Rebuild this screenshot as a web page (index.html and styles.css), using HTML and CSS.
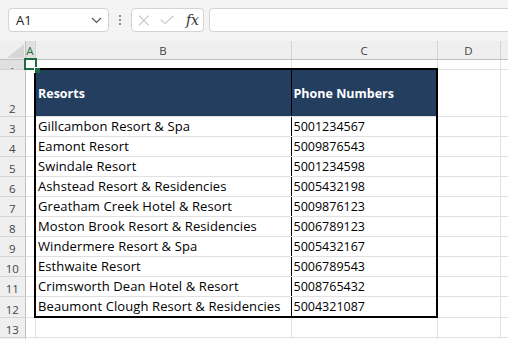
FILE: index.html
```html
<!DOCTYPE html>
<html>
<head>
<meta charset="utf-8">
<link rel="stylesheet" href="styles.css">
</head>
<body>
<div class="app">
  <div class="toolbar">
    <div class="namebox">
      <span class="ref">A1</span>
      <svg class="chev" width="11" height="7" viewBox="0 0 11 7"><polyline points="1,1 5.5,5.5 10,1" fill="none" stroke="#555" stroke-width="1.2"/></svg>
    </div>
    <div class="dots"><i></i><i></i><i></i></div>
    <div class="fxgroup">
      <svg width="13" height="13" viewBox="0 0 13 13"><path d="M1 1L12 12M12 1L1 12" stroke="#c4c4c4" stroke-width="1.2" fill="none"/></svg>
      <svg width="16" height="10" viewBox="0 0 16 10"><polyline points="1,4.5 5.5,9 15,0.5" fill="none" stroke="#c4c4c4" stroke-width="1.2"/></svg>
      <span class="fx">fx</span>
    </div>
    <div class="formula"></div>
  </div>
  <table class="grid">
    <colgroup>
      <col class="c-rh"><col class="c-a"><col class="c-b"><col class="c-c"><col class="c-d"><col class="c-e">
    </colgroup>
    <tr class="colhdr">
      <th class="corner"><svg width="17" height="14" viewBox="0 0 17 14"><polygon points="17,0 17,14 0,14" fill="#d6d6d6"/></svg></th>
      <th class="selcol">A</th><th>B</th><th>C</th><th>D</th><th></th>
    </tr>
    <tr class="r1">
      <th class="rh rsel"><span>1</span></th>
      <td class="a1"><div class="selbox"></div></td><td></td><td></td><td></td><td></td>
    </tr>
    <tr class="r2">
      <th class="rh">2</th>
      <td></td>
      <td class="hd tl">Resorts</td>
      <td class="hd tr">Phone Numbers</td>
      <td></td><td></td>
    </tr>
    <tr><th class="rh">3</th><td></td><td class="bl">Gillcambon Resort &amp; Spa</td><td class="br">5001234567</td><td></td><td></td></tr>
    <tr><th class="rh">4</th><td></td><td class="bl">Eamont Resort</td><td class="br">5009876543</td><td></td><td></td></tr>
    <tr><th class="rh">5</th><td></td><td class="bl">Swindale Resort</td><td class="br">5001234598</td><td></td><td></td></tr>
    <tr><th class="rh">6</th><td></td><td class="bl">Ashstead Resort &amp; Residencies</td><td class="br">5005432198</td><td></td><td></td></tr>
    <tr><th class="rh">7</th><td></td><td class="bl">Greatham Creek Hotel &amp; Resort</td><td class="br">5009876123</td><td></td><td></td></tr>
    <tr><th class="rh">8</th><td></td><td class="bl">Moston Brook Resort &amp; Residencies</td><td class="br">5006789123</td><td></td><td></td></tr>
    <tr><th class="rh">9</th><td></td><td class="bl">Windermere Resort &amp; Spa</td><td class="br">5005432167</td><td></td><td></td></tr>
    <tr><th class="rh">10</th><td></td><td class="bl">Esthwaite Resort</td><td class="br">5006789543</td><td></td><td></td></tr>
    <tr><th class="rh">11</th><td></td><td class="bl">Crimsworth Dean Hotel &amp; Resort</td><td class="br">5008765432</td><td></td><td></td></tr>
    <tr class="last"><th class="rh">12</th><td></td><td class="bl">Beaumont Clough Resort &amp; Residencies</td><td class="br">5004321087</td><td></td><td></td></tr>
    <tr><th class="rh">13</th><td></td><td></td><td></td><td></td><td></td></tr>
    <tr><th class="rh"></th><td></td><td></td><td></td><td></td><td></td></tr>
  </table>
</div>
</body>
</html>
```
FILE: styles.css
```css
html, body {
  margin: 0;
  padding: 0;
}
body {
  background: #f3f3f3;
  width: 508px;
  height: 339px;
  overflow: hidden;
}
.app {
  width: 508px;
  height: 339px;
  overflow: hidden;
}
.toolbar {
  display: flex;
  align-items: flex-start;
  height: 41px;
  box-sizing: border-box;
  padding: 8px 0 0 8px;
}
.namebox {
  width: 101px;
  height: 24px;
  box-sizing: border-box;
  border: 1px solid #d4d4d4;
  border-radius: 4px;
  background: #fff;
  display: flex;
  align-items: center;
  justify-content: space-between;
  padding: 0 6px 0 7px;
  flex: none;
}
.ref {
  font-family: "Open Sans", sans-serif;
  font-size: 13px;
  color: #222;
}
.dots {
  width: 22px;
  height: 24px;
  display: flex;
  flex-direction: column;
  align-items: center;
  justify-content: center;
  gap: 2px;
  flex: none;
}
.dots i {
  display: block;
  width: 2px;
  height: 2px;
  background: #8c8c8c;
}
.fxgroup {
  width: 73px;
  height: 24px;
  box-sizing: border-box;
  border: 1px solid #d4d4d4;
  border-radius: 4px;
  background: #fff;
  display: flex;
  align-items: center;
  padding: 0 4px 0 6px;
  gap: 10px;
  flex: none;
}
.fx {
  font-family: "DejaVu Serif", "Liberation Serif", serif;
  font-style: italic;
  font-size: 14px;
  color: #333;
  margin-left: 2px;
}
.formula {
  flex: 1;
  height: 24px;
  box-sizing: border-box;
  margin-left: 5px;
  margin-right: -8px;
  border: 1px solid #d4d4d4;
  border-radius: 4px;
  background: #fff;
}
.grid {
  border-collapse: collapse;
  table-layout: fixed;
  width: 580px;
  background: #fff;
  font-family: "Open Sans", sans-serif;
  font-size: 12.5px;
  color: #000;
}
.c-rh { width: 25px; }
.c-a { width: 10px; }
.c-b { width: 256px; }
.c-c { width: 146px; }
.c-d { width: 63px; }
.c-e { width: 80px; }
.grid td, .grid th {
  padding: 0;
  white-space: nowrap;
  overflow: hidden;
}
.grid td {
  border-right: 1px solid #e1e1e1;
  border-bottom: 1px solid #e1e1e1;
  height: 19px;
  line-height: 17px;
  padding-left: 2px;
  vertical-align: middle;
}
.colhdr th {
  height: 18px;
  background: #efefef;
  border-right: 1px solid #d4d4d4;
  border-bottom: 1px solid #bfbfbf;
  font-family: "Open Sans", sans-serif;
  font-weight: normal;
  font-size: 11.5px;
  color: #444;
  text-align: center;
  vertical-align: middle;
}
.colhdr th.corner {
  text-align: right;
  vertical-align: bottom;
  border-right: 1px solid #bfbfbf;
}
.corner svg {
  display: block;
  margin: 0 1px 1px auto;
}
.colhdr th.selcol {
  background: #e0e0e0;
  color: #1e7145;
}
th.rh {
  background: #efefef;
  border-right: 1px solid #bfbfbf;
  border-bottom: 1px solid #d4d4d4;
  font-family: "Open Sans", sans-serif;
  font-weight: normal;
  font-size: 11.5px;
  color: #444;
  text-align: center;
  vertical-align: bottom;
  line-height: 15px;
}
th.rsel {
  background: #e0e0e0;
  line-height: 9px;
}
.r1 td, .r1 th {
  height: 8px;
}
.r1 th span {
  display: block;
  height: 8px;
  overflow: hidden;
  line-height: 22px;
  font-size: 11px;
}
.r2 td, .r2 th {
  height: 46px;
}
.a1 {
  position: relative;
  overflow: visible !important;
}
.selbox {
  position: absolute;
  left: -2px;
  top: -2px;
  width: 9px;
  height: 8px;
  border: 2px solid #1d6b3f;
}
.selbox::after {
  content: "";
  position: absolute;
  right: -5px;
  bottom: -5px;
  width: 5px;
  height: 5px;
  background: #1d6b3f;
  border-left: 1px solid #fff;
  border-top: 1px solid #fff;
}
.grid td.hd {
  background: #243e60;
  color: #fff;
  font-weight: bold;
  font-size: 12.5px;
  letter-spacing: 0;
  border-top: 2px solid #000;
  padding-left: 2px;
}
.grid td.tl {
  border-left: 2px solid #000;
  border-right: 1px solid #000;
}
.grid td.tr {
  border-right: 2px solid #000;
}
.grid td.bl {
  border-left: 2px solid #000;
  border-right: 1px solid #000;
  font-size: 13px;
  letter-spacing: 0.1px;
}
.grid td.br {
  border-right: 2px solid #000;
}
.last td.bl, .last td.br {
  border-bottom: 2px solid #000;
}
```
